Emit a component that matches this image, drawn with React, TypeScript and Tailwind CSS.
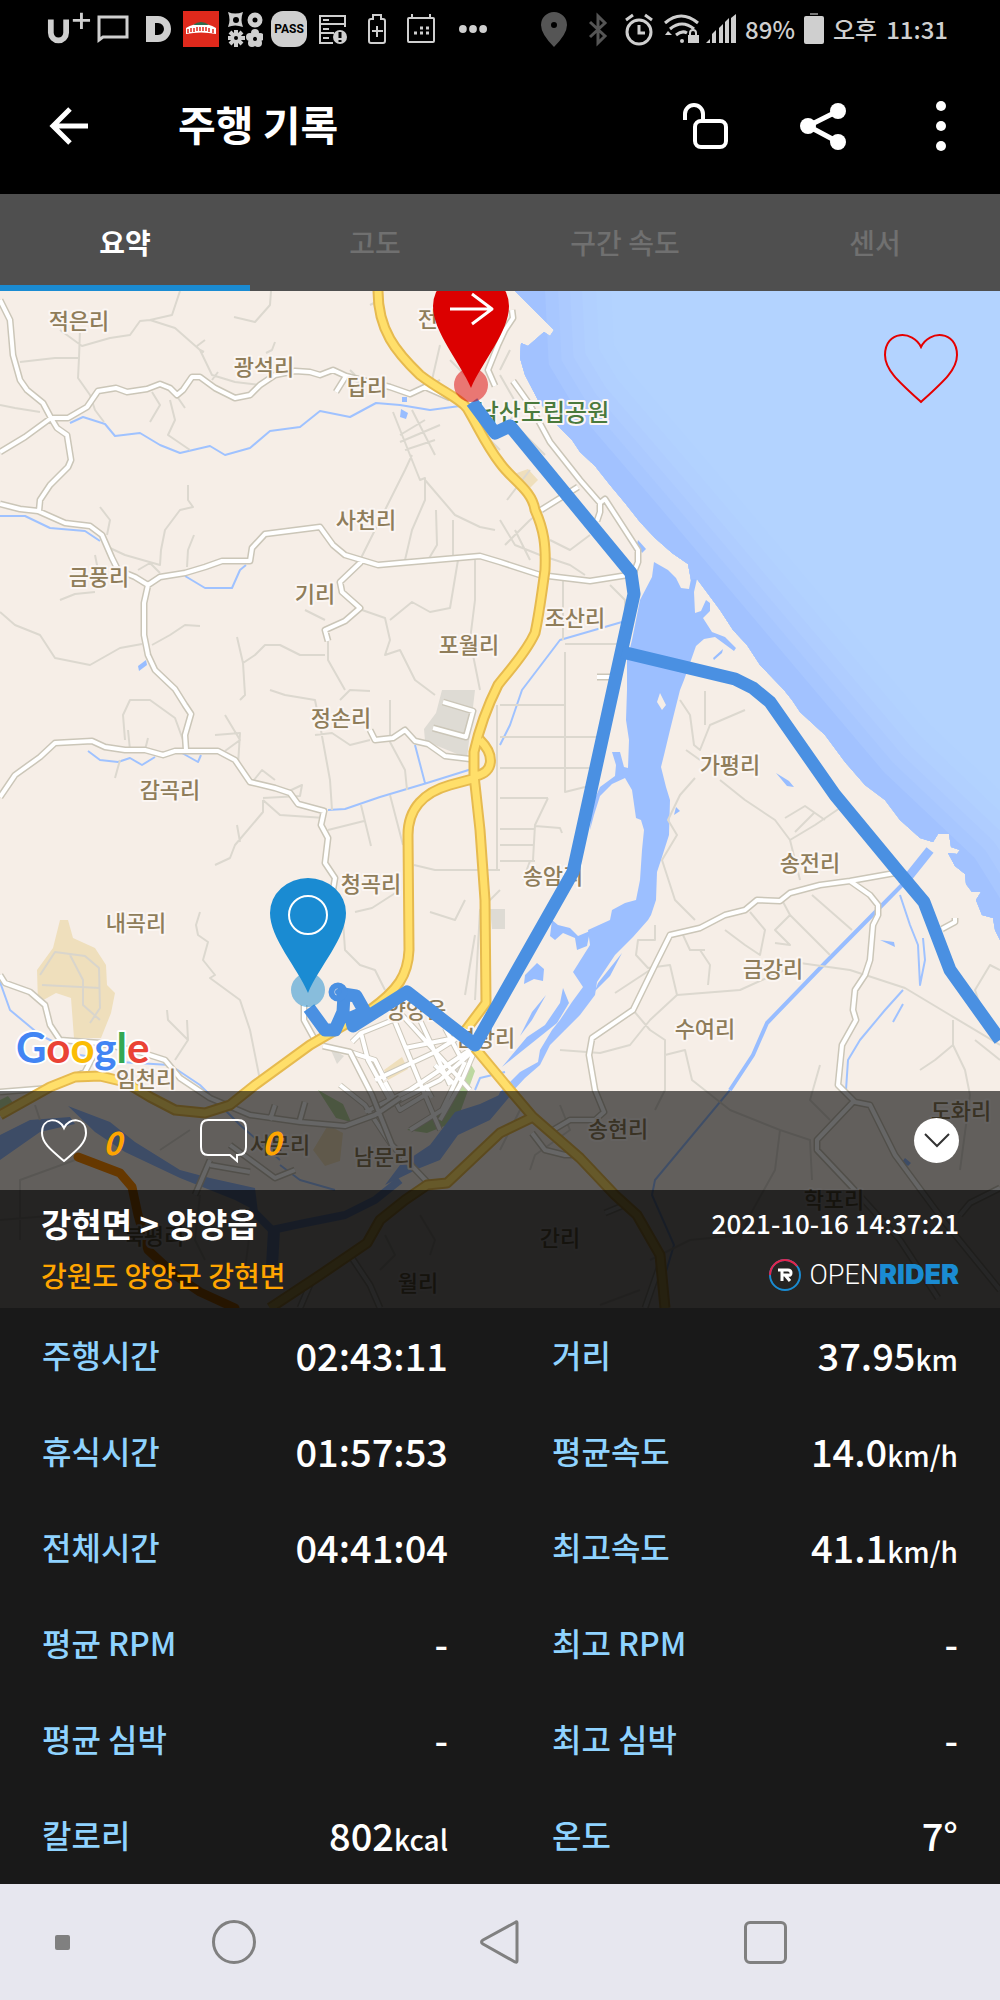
import type { ReactNode } from 'react'

const tabs = ['요약', '고도', '구간 속도', '센서']

const stats = [
  { label: '주행시간', value: '02:43:11' },
  { label: '거리', value: '37.95', unit: 'km' },
  { label: '휴식시간', value: '01:57:53' },
  { label: '평균속도', value: '14.0', unit: 'km/h' },
  { label: '전체시간', value: '04:41:04' },
  { label: '최고속도', value: '41.1', unit: 'km/h' },
  { label: '평균 RPM', value: '-' },
  { label: '최고 RPM', value: '-' },
  { label: '평균 심박', value: '-' },
  { label: '최고 심박', value: '-' },
  { label: '칼로리', value: '802', unit: 'kcal' },
  { label: '온도', value: '7°' },
]

// village names, centred on x, y is the baseline
const places: [string, number, number][] = [
  ['적은리', 79, 329],
  ['광석리', 264, 375],
  ['답리', 367, 395],
  ['전진리', 448, 327],
  ['사천리', 366, 528],
  ['금풍리', 99, 585],
  ['기리', 315, 602],
  ['포월리', 469, 653],
  ['조산리', 575, 626],
  ['정손리', 341, 726],
  ['감곡리', 170, 798],
  ['가평리', 730, 773],
  ['송전리', 810, 871],
  ['청곡리', 371, 892],
  ['내곡리', 136, 931],
  ['송암리', 553, 884],
  ['금강리', 773, 977],
  ['수여리', 705, 1037],
  ['양양읍', 416, 1018],
  ['연창리', 485, 1046],
  ['임천리', 146, 1087],
  ['서문리', 280, 1153],
  ['남문리', 384, 1165],
  ['송현리', 618, 1137],
  ['도화리', 961, 1119],
  ['학포리', 834, 1208],
  ['간리', 560, 1246],
  ['월리', 418, 1291],
  ['북평리', 154, 1244],
]

const coast =
  'M515 291L554 330L550 336L544 332L528 346L521 343L520 358L525 375L538 400L556 424L572 440L580 452L595 466L610 485L625 503L640 522L655 538L672 553L688 564L691 580L697 579L720 610L733 630L747 645L760 665L784 690L792 700L800 712L825 735L845 762L865 785L885 800L900 820L920 838L933 842L938 834L949 834L951 847L960 850L957 854L948 853L955 866L965 874L966 884L972 892L981 892L976 900L982 915L993 918L995 930L1000 940'

// depth contours run parallel to this line
const shelf = 'M525 270L530 370L560 420L650 525L760 655L870 785L960 870L1010 950'

const shelfBands = [
  { width: 170, color: '#b2d2ff' },
  { width: 140, color: '#b1d0ff' },
  { width: 112, color: '#afcdff' },
  { width: 88, color: '#accaff' },
  { width: 64, color: '#a8c7ff' },
  { width: 38, color: '#a2c2ff' },
]

const river =
  'M654 562L668 570L676 578L681 588L689 589L691 579L697 579L694 592L695 613L701 611L706 600L710 603L710 611L703 618L712 632L725 637L736 648L734 651L715 637L704 639L696 646L690 663L684 680L680 690L670 730L664 755L661 767L666 787L670 800L669 835L661 860L657 872L656 900L651 915L648 920L633 937L615 955L597 982L595 995L580 1015L565 1030L550 1045L540 1065L525 1078L512 1092L495 1104L500 1092L512 1080L520 1072L538 1062L540 1050L552 1030L560 1020L572 1002L583 987L573 972L590 945L588 930L610 920L612 910L625 903L636 900L640 880L642 850L644 830L641 820L636 818L632 790L625 778L612 784L600 796L594 815L590 830L592 805L600 787L615 776L616 765L612 752L620 752L624 767L628 768L629 740L626 720L627 690L627 660L632 640L640 600L652 577Z'

const whiteRoads =
  'M0 300L10 320L13 355L20 380L27 390L43 403L51 418L68 418L87 407L98 391L116 388L127 392L147 389L160 384L170 388L177 395L183 390L192 377L200 377L215 388L235 398L250 395L260 385L275 375L295 371L310 372L320 375L333 370L346 376L390 387L410 394L425 387L450 398M346 376L336 392' +
  'M51 418L25 437L0 452M51 418L57 428L67 435L71 460L68 467L50 485L40 500L39 511' +
  'M0 504L20 509L38 511L65 523L90 526L102 535L112 558L118 570L135 577L148 585L160 577L185 573L205 567L222 561L250 561L252 548L265 534L320 527L333 545L345 555L378 565L400 563L480 556L500 562L540 575L590 581L628 575' +
  'M148 585L144 603L144 635L148 655L155 670L175 689L185 705L191 714L185 735L186 750' +
  'M0 797L15 775L40 757L55 743L92 741L105 747L125 750L145 750L163 755L175 751L218 751L235 760L250 782L275 788L290 793L298 804L324 811L321 825L328 838L325 863L335 878L333 890' +
  'M361 562L340 582L342 592L360 608L345 621L325 630L328 641M370 730L375 740L393 738L405 730L415 741L428 744L445 756L470 759' +
  'M0 975L5 983L30 992L45 1005L50 1025L60 1040L100 1043L140 1052L165 1060L180 1078L210 1098L250 1115L300 1122L345 1126L375 1115L400 1098M304 1005L304 1020L315 1040' +
  'M323 1046L350 1052L372 1095L392 1145L430 1185M100 1043L85 1072L50 1088L0 1092' +
  'M532 1133L545 1150L565 1155L578 1155M553 1130L570 1120L595 1120L604 1112L595 1090L589 1055L592 1038L633 1010L655 965L670 935L700 928L725 915L745 910L757 900L780 901L790 893L820 885L850 881L895 873' +
  'M850 881L870 895L878 905L878 915L873 925L870 960L865 975L855 990L853 1010L856 1020L842 1045L838 1085L855 1102L870 1105L895 1155L943 1220L1000 1290M853 1102L817 1140L817 1150L850 1185L900 1240L938 1298M960 1215L970 1203L1000 1188' +
  'M513 381L530 405L550 442L580 480L600 503L605 499L638 550L638 562L634 572M541 510L578 487M600 503L600 512L597 521' +
  'M512 310L513 318L505 330L498 345L488 370L495 386M597 677L611 677M955 918L955 922L942 929' +
  'M443 702L473 711L466 737L433 728M210 1160L195 1195M270 1120L275 1105M300 1120L305 1102M230 1145L275 1178L295 1170M352 1258L370 1285L380 1308M312 1280L300 1308M660 1265L645 1308M605 1213L622 1206M210 1165L250 1172'

const townRoads =
  'M352 1042L361 1033L403 1016L470 1090M361 1033L368 1060L390 1100M395 1022L425 1095L440 1130M420 1020L450 1085M470 1030L435 1052L375 1080M480 1045L440 1080L380 1110M470 1050L410 1090L365 1112M445 1028L462 1060M405 1048L455 1038M350 1052L375 1060L385 1080M385 1082L400 1110L430 1092M465 1062L442 1110L410 1130M435 1065L455 1085M475 1050L460 1085L440 1120M340 1085L365 1105L388 1140L395 1150M425 1085L432 1098'

const thinRoads =
  'M180 291L172 315L150 320L140 321L130 335L110 338L82 346L60 330M150 320L175 328L200 350L212 375L235 382L260 385M80 330L79 358L55 358L20 362M79 358L78 378L90 395L95 410L104 422M271 291L270 305L255 322L234 317M197 346L205 340M200 350L204 352M218 372L212 380M176 395L185 408M152 392L160 405L150 422M170 400L175 420L168 435L190 450M0 405L15 408L40 412M275 342L272 350L266 353' +
  'M188 485L188 500L193 507L180 510L165 530L161 550L160 565L125 555L110 548M100 507L110 520L107 535M60 600L75 594L95 592M0 612L15 625L40 635L55 658L90 665L120 648L142 644M152 645L170 635L185 625L200 626M95 555L98 570M194 535L188 550L187 567M138 570L150 563L160 573' +
  'M237 637L243 663L245 695L240 700M243 663L255 655L265 645L280 645L300 655L325 655M328 641L328 660L345 690M305 610L325 620M362 610L385 618L390 640L385 655L400 650L415 680L435 695M390 620L412 602L430 612L450 608L458 560M475 560L475 600L470 640L480 690M412 455L405 470L360 560M393 412L410 455L420 480L425 478L425 500L412 530L405 560M400 435L425 420M400 442L440 425M405 450L435 440M412 410L435 455M425 480L455 515L480 527L495 530M428 560L437 545L436 510M453 560L453 520M355 375L350 370M410 394L440 380M440 345L432 380M380 300L370 305M450 360L470 380' +
  'M125 740L123 715L130 700L150 700L175 718L183 740M130 750L128 730M145 750L148 738M120 760L115 778M225 751L240 740L225 715M215 735L240 733L238 765M270 690L285 695L315 700L320 725L330 780L332 810M315 735L332 733L350 745L370 740M263 800L263 812L235 845L230 858L215 865M263 800L280 815L325 818M250 785L262 770L275 780M263 798L300 796L302 785L285 793M237 825L240 842M200 912L196 925L198 935L208 942L203 960L215 975L210 978L240 1000L250 1030L260 1080M167 1010L168 1020L188 1040L175 1060M188 1040L187 1020M328 830L364 821M361 805L371 846M390 795L403 845M355 912L372 908L400 890M342 905L345 950L360 965L375 970L385 990M390 700L390 742L405 770L407 790M340 700L350 690L370 691' +
  'M414 865L435 870L500 870M500 705L565 705M500 737L598 737M500 768L590 768M500 798L548 798M565 652L565 792L585 787M565 644L620 644M500 829L534 829M500 845L534 845M500 861L535 861M548 798L535 825L533 860M535 826L560 828L562 833M530 861L523 880M497 705L497 870M500 890L480 910L475 1000M430 912L455 920L465 900M465 995L475 935M563 580L563 640M625 640L625 600L610 585' +
  'M500 520L515 545L540 555L570 565L585 575M505 545L530 520L550 505M507 500L530 470M515 530L530 560M550 540L570 550L590 535M500 375L520 410L500 430M510 350L500 370M520 430L545 455M480 430L500 450' +
  'M680 700L690 715L694 745L700 750L710 725L745 710M705 691L705 725M686 750L700 760M695 778L680 795L668 820L677 835L662 860L675 900L695 920M720 780L745 800L775 820L790 840L800 880M790 840L815 825L840 808M785 818L805 806L825 820M795 832L815 812M812 895L852 930M790 915L830 955M782 900L790 915L775 930L790 945L775 943M655 925L655 940L638 940L636 955L648 968L670 965L677 995M615 993L650 970M677 995L740 990L800 963L850 970L905 988L950 1015L1000 1045M700 950L710 965L708 985M725 930L745 945L760 955L765 930L750 912M683 935L690 950L705 950' +
  'M677 995L650 1020L630 1045L600 1053L560 1050M633 1010L650 1030L665 1040L665 1090L655 1110M665 1055L685 1050L692 1080L730 1110L780 1130L810 1140L812 1180M953 1020L953 1045L935 1060L920 1070M953 1045L965 1070L970 1095L960 1170M1000 1060L975 1040M820 1065L810 1100L830 1120M780 1130L775 1170L750 1215L740 1240M530 1170L535 1155L570 1130L560 1105M500 1150L520 1110M985 1020L975 990L990 965L1000 970' +
  'M20 1240L20 1180L75 1160M160 1150L190 1130M0 1220L60 1215M200 1195L195 1240L205 1260M250 1230L245 1270M420 1215L435 1240L430 1255M380 1270L395 1255L385 1235M650 1260L690 1240L740 1235M600 1305L640 1290M40 1120L35 1105'

const streams =
  'M70 423L83 417L105 424L115 436L140 433L160 445L180 453L210 446L225 455L250 448L270 431L300 427L320 411L350 417L376 403L400 405L430 410L460 406M0 516L25 516L50 528L85 531L100 541M185 576L205 588L232 588L240 570L246 565M328 810L345 809L380 797L427 783L475 768M415 745L425 783M88 751L100 760L118 762L130 758L142 765L155 757M182 753L198 762L201 755M0 982L10 1010L40 1035L80 1055L120 1062L170 1065L200 1085L240 1125L280 1160M500 745L510 725L522 690L560 640L622 622M900 895L910 925L918 945L920 985L925 960L923 938M903 990L885 1010L860 1040L848 1060L846 1090M903 1004L893 1022M730 1090L655 1180L652 1195L674 1245L665 1275M280 1165L300 1180L335 1190M475 1090L480 1078L505 1072'

const yellowRoads =
  'M378 291C378 330 396 352 420 375C442 392 458 397 467 408C480 430 486 445 500 463C512 480 532 490 535 510C544 530 546 545 545 570C541 600 539 615 535 633C525 655 505 675 498 685C488 705 480 725 474 752L474 775L480 830L485 900L486 1003L462 1035' +
  'M475 1048L510 1090L533 1117L580 1158L615 1195L637 1215L660 1255L665 1308' +
  'M476 778L450 785C425 792 408 808 408 835L409 950C408 975 398 990 370 1010L310 1045L255 1085L230 1105L205 1113L175 1110L150 1097L125 1082L100 1076L75 1077L50 1087L0 1115' +
  'M480 740C495 755 494 772 476 776M533 1117L500 1133L447 1183L427 1185L405 1200L380 1220L367 1243L320 1275L270 1308'

function StatusSlot({ children }: { children: ReactNode }) {
  return <span className="flex w-11 items-center justify-center">{children}</span>
}

function StatusBar() {
  return (
    <div className="flex h-[58px] items-center justify-between bg-black pr-[52px] pl-[47px] text-[#cfcfcf]">
      <div className="flex items-center">
        <StatusSlot>
          <svg width="46" height="36" viewBox="0 0 46 36" fill="none" stroke="currentColor">
            <path d="M4 8v14a8 8 0 0 0 16 0V8" strokeWidth="6" />
            <path d="M36 1v17M27 9h18" strokeWidth="3" />
          </svg>
        </StatusSlot>
        <StatusSlot>
          <svg width="32" height="30" viewBox="0 0 32 30" fill="none" stroke="currentColor" strokeWidth="3">
            <path d="M2 26V3h28v20H6z" />
          </svg>
        </StatusSlot>
        <StatusSlot>
          <svg className="ml-1" width="28" height="28" viewBox="0 0 28 28" fill="currentColor" fillRule="evenodd">
            <path d="M1 1h12a13 13 0 0 1 0 26H1zM10 8v12h3a6 6 0 0 0 0-12z" />
          </svg>
        </StatusSlot>
        <StatusSlot>
          <span className="flex size-9 items-center justify-center bg-[#df291c]">
            <svg width="32" height="18" viewBox="0 0 32 18">
              <path d="M1 8q15-9 30 0v6q-15-3-30 0z" fill="#fff" />
              <path d="M8 5q8-6 16 0z" fill="#2f6b4c" />
              <path d="M3 9v4M6 8v4M9 8v4M12 7v4M15 7v4M18 7v4M21 7v4M24 8v4M28 9v4" stroke="#df291c" strokeWidth="1.5" />
            </svg>
          </span>
        </StatusSlot>
        <StatusSlot>
          <svg width="36" height="36" viewBox="0 0 36 36" fill="currentColor">
            <path d="M1 1q7 3 15 0q-3 8 0 15q-8-3-15 0q3-7 0-15z" />
            <circle cx="9" cy="9" r="3" fill="#000" />
            <circle cx="28" cy="9" r="5" fill="none" stroke="currentColor" strokeWidth="5" />
            <path d="M9 19v17M1 27h17M3 21l12 12M15 21L3 33" stroke="currentColor" strokeWidth="4" />
            <circle cx="9" cy="27" r="2" fill="#000" />
            <circle cx="28" cy="22" r="4" />
            <circle cx="23" cy="26" r="4" />
            <circle cx="33" cy="26" r="4" />
            <circle cx="25" cy="32" r="4" />
            <circle cx="31" cy="32" r="4" />
            <circle cx="28" cy="28" r="2" fill="#000" />
          </svg>
        </StatusSlot>
        <StatusSlot>
          <span className="flex size-9 items-center justify-center rounded-xl bg-[#cfcfcf] font-[Roboto] text-[12px] font-bold text-black">
            PASS
          </span>
        </StatusSlot>
        <StatusSlot>
          <svg width="30" height="31" viewBox="0 0 30 31" fill="none" stroke="currentColor" strokeWidth="2">
            <path d="M27 13V2H2v27h13M2 10h25M2 19h14M5 6h6M5 15h6M5 24h6" />
            <circle cx="22" cy="23" r="7" fill="currentColor" stroke="none" />
            <path d="M22 18v6M22 26v2" stroke="#000" strokeWidth="3" />
          </svg>
        </StatusSlot>
        <StatusSlot>
          <svg width="20" height="31" viewBox="0 0 20 31" fill="none" stroke="currentColor" strokeWidth="2">
            <path d="M6 5V1h8v4h2q2 0 2 2v20q0 2-2 2H4q-2 0-2-2V7q0-2 2-2zM10 12v11M5 17h11" />
          </svg>
        </StatusSlot>
        <StatusSlot>
          <svg width="28" height="30" viewBox="0 0 28 30" fill="none" stroke="currentColor" strokeWidth="2">
            <rect x="1" y="4" width="26" height="24" rx="1" />
            <path d="M5 0v5M23 0v5" />
            <path d="M13 14h3M19 14h3M7 19h3M13 19h3M19 19h3" strokeWidth="3" />
          </svg>
        </StatusSlot>
        <StatusSlot>
          <svg className="ml-4" width="36" height="10" viewBox="0 0 36 10" fill="currentColor">
            <circle cx="5" cy="5" r="5" />
            <circle cx="18" cy="5" r="5" />
            <circle cx="31" cy="5" r="5" />
          </svg>
        </StatusSlot>
      </div>
      <div className="flex items-center gap-[9px] text-[24px] font-medium">
        <div className="flex">
          <svg className="mr-[10px]" width="28" height="35" viewBox="0 0 28 35" fill="#555" fillRule="evenodd">
            <path d="M14 0a13 13 0 0 1 13 13q0 9-13 22Q1 22 1 13A13 13 0 0 1 14 0zM14 10a3 3 0 1 0 0 6a3 3 0 0 0 0-6z" />
          </svg>
          <svg className="mx-[10px]" width="20" height="35" viewBox="0 0 20 35" fill="none" stroke="#555" strokeWidth="3">
            <path d="M2 10l15 14l-7 7V4l7 7L2 25" />
          </svg>
          <svg className="mx-[7px]" width="28" height="35" viewBox="0 0 28 35" fill="none" stroke="currentColor" strokeWidth="3">
            <circle cx="14" cy="20" r="12" />
            <path d="M14 13v8h6M1 8l7-5M27 8l-7-5" />
          </svg>
          <svg className="mx-[4px]" width="36" height="35" viewBox="0 0 36 35" fill="none" stroke="currentColor" strokeWidth="3">
            <path d="M1 11q16-14 33 0M6 17q12-10 24 0M12 23q6-5 11-2" />
            <circle cx="18" cy="29" r="2" fill="currentColor" stroke="none" />
            <path d="M1 23l3-4l4 4zM24 23h11v8H24z" fill="currentColor" stroke="none" />
            <path d="M26 24v-3q0-3 3-3t3 3v3" strokeWidth="2" />
          </svg>
          <svg className="ml-[2px]" width="30" height="35" viewBox="0 0 30 35" fill="currentColor">
            <path d="M0 31l4-4v4zM6 31v-9l4-4v13zM13 31V16l4-4v19zM19 31V10l4-4v25zM25 31V6l5-4v29z" />
          </svg>
        </div>
        <span>89%</span>
        <svg width="20" height="32" viewBox="0 0 20 32" fill="currentColor">
          <path d="M6 0h8v2H6z" fill="#777" />
          <rect y="3" width="20" height="28" rx="2" />
        </svg>
        <span>오후</span>
        <span>11:31</span>
      </div>
    </div>
  )
}

function Header() {
  return (
    <header className="flex h-[136px] items-center bg-black pr-[49px] pl-[48px] text-white">
      <button aria-label="뒤로" className="mr-[89px]">
        <svg width="41" height="40" viewBox="0 0 41 40" fill="none" stroke="currentColor" strokeWidth="5">
          <path d="M40 20H5M22 3L5 20l17 17" />
        </svg>
      </button>
      <h1 className="flex-1 pb-1 text-[41px] font-bold">주행 기록</h1>
      <div className="flex items-center">
        <button aria-label="잠금 해제" className="mr-[72px]">
          <svg width="46" height="48" viewBox="0 0 46 48" fill="none" stroke="currentColor" strokeWidth="4">
            <path d="M3 18V12a9 9 0 0 1 18 0V19" />
            <rect x="13" y="19" width="31" height="26" rx="6" />
          </svg>
        </button>
        <button aria-label="공유" className="mr-[84px]">
          <svg width="47" height="48" viewBox="0 0 47 48" fill="currentColor" stroke="currentColor">
            <path d="M38 9L8 24l30 16" fill="none" strokeWidth="5" />
            <circle cx="38" cy="9" r="8" stroke="none" />
            <circle cx="8" cy="24" r="8" stroke="none" />
            <circle cx="38" cy="40" r="8" stroke="none" />
          </svg>
        </button>
        <button aria-label="더보기">
          <svg width="20" height="52" viewBox="0 0 20 52" fill="currentColor">
            <circle cx="10" cy="6" r="5" />
            <circle cx="10" cy="26" r="5" />
            <circle cx="10" cy="46" r="5" />
          </svg>
        </button>
      </div>
    </header>
  )
}

function RideMap() {
  return (
    <svg className="block h-auto w-full" viewBox="0 291 1000 1017" fill="none" strokeLinejoin="round">
      <defs>
        <clipPath id="sea">
          <path d={coast + 'V291Z'} />
        </clipPath>
      </defs>
      <rect y="291" width="1000" height="1017" fill="#f6eee7" />

      {/* parks, school grounds, factories */}
      <g fill="#efdfbc">
        <path d="M60 920h8l5 18l22 10l11 17l1 20l8 8l-4 20l-10 25h-27l-3-40l-15-5l-18 10l-1-33l16-22z" />
        <path d="M514 474l14-5l10 11l-8 8zM384 1070l18-13l6 12l-20 11zM313 1150l15-25l15 8l-3 28l-15 5z" />
      </g>
      <path d="M442 690h33l-8 68l-42-17l-1-12l12-16zM490 909h15v20h-13zM330 1048l14 8l-7 8zM450 1062l12-8l8 14l-12 8z" fill="#dedbd4" />
      <path d="M450 1105l20-42l5 8l-18 50l-30 12l-20-3zM318 1090l25 14l8 18l-15-4zM0 1100l8-4l6 8l-14 6z" fill="#bcd8a0" />

      {/* water */}
      <g clipPath="url(#sea)">
        <rect x="500" y="291" width="500" height="660" fill="#b3d3ff" />
        {shelfBands.map(({ width, color }) => (
          <path key={width} d={shelf} stroke={color} strokeWidth={width} />
        ))}
      </g>
      <path d={river} fill="#9cbfff" />
      <g fill="#98bdff">
        <path d="M552 920l6 5l12 3l8 8l12-5l-3 15l-10 4l-2-12l-12-5l-8 7l-5-4zM525 975l12-12l7 6l-1 12l-9-2l-10 5zM546 995l-14 17l-12 24l12-16zM563 988l-3 15l-15 22l-18 12l-25 30l20-16l35-28l12-20zM622 953l-24 30l-3 8l15-15zM776 773l13 8l5 6l-7-1zM638 540l8 9l-4 4l-5-9zM713 658l10-9l-1 4l-8 7zM880 940l14 2l1 5z" />
        <path d="M138 666l8-6l1 5l-8 6zM402 397h5v5h-5zM401 409l7 4l-2 6l-6-2zM905 1158l6 5l-3 3l-6-4zM676 807l4 4l-6 4z" />
        <path d="M0 1135L30 1120L70 1117L75 1124L40 1132L0 1160z" />
        <path d="M68 1106L110 1122L135 1142L180 1170L210 1178L255 1188L258 1212L235 1200L180 1178L125 1152L95 1132z" />
        <path d="M510 1090L480 1104L455 1112L430 1145L400 1165L385 1185L420 1168L440 1160L458 1135L490 1120L512 1094z" />
      </g>
      <g stroke="#98bdff">
        <path d="M400 1180L375 1200L345 1215L300 1224L272 1230L250 1208" strokeWidth="8" />
        <path d="M274 1230L272 1266" strokeWidth="12" />
        <path d="M930 850L902 885" strokeWidth="9" />
        <path d="M902 885L825 963L767 1023L753 1055L730 1090" strokeWidth="4" />
        <path d={streams} stroke="#9fc2ff" strokeWidth="2" />
      </g>
      <path d="M660 693l6 12l-4 5l-5-8zM595 1010l-12 15l-10 10M634 950l-12 14l8-2z" fill="#f6eee7" />

      {/* roads, each class with a darker casing */}
      <path d={thinRoads} stroke="#dcd8cf" strokeWidth="2" />
      <path d="M40 975l15-23l30 4l14 12l1 40l-10 15M42 985l58 3M70 955l13 25v25l17 15" stroke="#d9d5cc" strokeWidth="2" />
      <path d={townRoads} stroke="#cdc8bb" strokeWidth="6" />
      <path d={townRoads} stroke="#fff" strokeWidth="4" />
      <path d={whiteRoads} stroke="#cbc6b8" strokeWidth="7" />
      <path d={whiteRoads} stroke="#fff" strokeWidth="4" />
      <path d={yellowRoads} stroke="#e6ba4f" strokeWidth="11" />
      <path d={yellowRoads} stroke="#ffdf6a" strokeWidth="7" />
      <path d="M78 1157L120 1173L132 1187L138 1215L148 1250L175 1275L200 1292L235 1308" stroke="#ff8c00" strokeWidth="9" strokeLinecap="round" />

      <g
        className="font-['Noto_Sans_CJK_KR',sans-serif] text-[22px] font-medium"
        textAnchor="middle"
        fill="#8f7d5a"
        stroke="#fbf6f3"
        strokeWidth="4"
        paintOrder="stroke"
      >
        {places.map(([name, x, y]) => (
          <text key={name} x={x} y={y}>
            {name}
          </text>
        ))}
        <text x="543" y="421" fill="#4a7a3c" className="text-[24px]">
          낙산도립공원
        </text>
      </g>

      <text
        x="16"
        y="1063"
        className="font-[Lato] text-[42px] font-bold"
        stroke="#fff"
        strokeWidth="4"
        paintOrder="stroke"
      >
        <tspan fill="#4285f4">G</tspan>
        <tspan fill="#ea4335">o</tspan>
        <tspan fill="#fbbc05">o</tspan>
        <tspan fill="#4285f4">g</tspan>
        <tspan fill="#34a853">l</tspan>
        <tspan fill="#ea4335">e</tspan>
      </text>

      {/* recorded track */}
      <g stroke="#4a90e2" strokeWidth="13">
        <path d="M309 1008L325 1030L335 1030L343 1012L344 995M337 993L356 996L365 1012L351 1018L353 1026L407 992L475 1045L573 872L634 594L631 573L510 426L495 433L472 402" />
        <path d="M622 652L735 679L753 688L770 702L835 795L897 870L924 902L950 970L1000 1040" />
        <circle cx="338" cy="992" r="3" fill="#4a90e2" />
      </g>

      {/* start / finish pins */}
      <circle cx="471" cy="385" r="17" fill="#dc0000" fillOpacity="0.5" />
      <path d="M471 388C460 362 433 332 433 306a38 35 0 0 1 76 0C509 332 482 362 471 388z" fill="#dc0000" />
      <path d="M450 309h40M472 294l20 15l-20 15" stroke="#fff" strokeWidth="3" />
      <circle cx="308" cy="990" r="17" fill="#1a8bd2" fillOpacity="0.5" />
      <path d="M308 993C297 967 270 938 270 913a38 35 0 0 1 76 0C346 938 319 967 308 993z" fill="#1a8bd2" />
      <circle cx="308" cy="915" r="19" stroke="#fff" strokeWidth="2" />
    </svg>
  )
}

function OpenRiderLogo() {
  return (
    <div className="flex items-center leading-8">
      <svg className="mr-2" width="34" height="34" viewBox="0 0 34 34" fill="none">
        <circle cx="17" cy="17" r="15" stroke="#1a8bd2" strokeWidth="2" />
        <path d="M2 17A15 15 0 0 1 29 8" stroke="#e5234b" strokeWidth="2" />
        <path d="M10 12h10q3 0 3 3t-3 2h-5M14 12v11M17 17l5 6" stroke="#fff" strokeWidth="3" />
      </svg>
      <span className="font-[Roboto] text-[27px] font-light text-white">OPEN</span>
      <span className="font-[Inter] text-[27px] font-black text-[#1a8bd2]">RIDER</span>
    </div>
  )
}

export default function App() {
  return (
    <div className="flex min-h-screen flex-col bg-[#191919] font-['Noto_Sans_CJK_KR',sans-serif]">
      <StatusBar />
      <Header />

      <nav className="grid h-[97px] grid-cols-4 bg-[#4f4f4f]">
        {tabs.map((tab, i) => (
          <button
            key={tab}
            className={
              i === 0
                ? 'border-b-6 border-[#1a8bd2] pt-1 text-[28px] font-bold text-white'
                : 'border-b-6 border-transparent pt-1 text-[28px] font-medium text-[#707070]'
            }
          >
            {tab}
          </button>
        ))}
      </nav>

      <main className="relative">
        <RideMap />

        <button aria-label="좋아요" className="absolute top-[41px] right-[41px]">
          <svg width="76" height="72" viewBox="0 0 76 72" fill="none" stroke="#e60000" strokeWidth="2">
            <path d="M38 15C30 -2 2 -2 2 23C2 38 16 50 38 70C60 50 74 38 74 23C74 -2 46 -2 38 15z" />
          </svg>
        </button>

        <div className="absolute inset-x-0 bottom-0">
          <div className="flex h-[99px] items-center bg-black/60 px-[41px] text-[32px] font-bold text-[#ffa500] italic">
            <svg className="mr-[15px]" width="47" height="43" viewBox="0 0 47 43" fill="none" stroke="#fff" strokeWidth="2">
              <path d="M23 9C18 -2 1 -2 1 14C1 24 10 31 23 42C36 31 45 24 45 14C45 -2 28 -2 23 9z" />
            </svg>
            <span>0</span>
            <svg className="mr-[15px] ml-[78px]" width="47" height="44" viewBox="0 0 47 44" fill="none" stroke="#fff" strokeWidth="2">
              <path d="M8 1h30q8 0 8 8v19q0 8-8 8h-1v6l-7-6H8q-7 0-7-8V9q0-8 7-8z" />
            </svg>
            <span>0</span>
            <button aria-label="접기" className="ml-auto flex size-[45px] items-center justify-center rounded-full bg-white">
              <svg width="26" height="15" viewBox="0 0 26 15" fill="none" stroke="#333" strokeWidth="2">
                <path d="M1 1l12 12L25 1" />
              </svg>
            </button>
          </div>
          <div className="flex h-[118px] items-center justify-between bg-black/85 px-[41px]">
            <div className="flex flex-col gap-3">
              <p className="text-[33px] leading-10 font-bold text-white">강현면 &gt; 양양읍</p>
              <p className="text-[28px] leading-10 font-medium text-[#ffa500]">강원도 양양군 강현면</p>
            </div>
            <div className="flex flex-col items-end gap-3">
              <time className="text-[26px] leading-10 font-medium text-white">2021-10-16 14:37:21</time>
              <div className="flex h-10 items-center">
                <OpenRiderLogo />
              </div>
            </div>
          </div>
        </div>
      </main>

      <dl className="grid flex-1 grid-cols-2 gap-x-[104px] px-[42px]">
        {stats.map(({ label, value, unit }) => (
          <div key={label} className="flex h-24 items-center justify-between pb-1">
            <dt className="text-[32px] font-medium text-[#8fd3ff]">{label}</dt>
            <dd className="text-[38px] font-medium text-white">
              {value}
              {unit && <span className="text-[28px]">{unit}</span>}
            </dd>
          </div>
        ))}
      </dl>

      <footer className="grid h-[116px] grid-cols-[124fr_220fr_310fr_222fr_124fr] items-center justify-items-center bg-[#e7e7ef] text-[#808080]">
        <button aria-label="고정" className="size-[15px] rounded-xs bg-[#808080]" />
        <button aria-label="홈" className="size-[44px] rounded-full border-3 border-[#808080]" />
        <button aria-label="이전">
          <svg width="42" height="46" viewBox="0 0 42 46" fill="none" stroke="currentColor" strokeWidth="3" strokeLinejoin="round">
            <path d="M38 3q1-1 1 1v38q0 2-2 1L5 25q-3-2 0-4z" />
          </svg>
        </button>
        <button aria-label="최근 앱" className="size-[43px] rounded-md border-3 border-[#808080]" />
      </footer>
    </div>
  )
}
